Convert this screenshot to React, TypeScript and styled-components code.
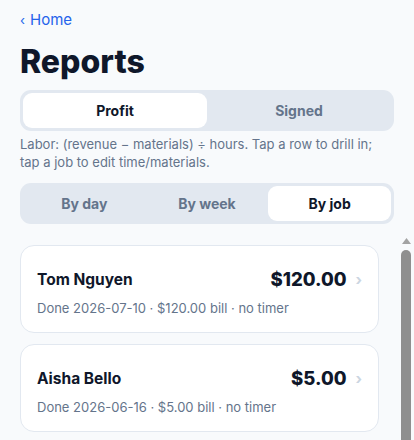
import React, { useState } from "react";
import styled, { createGlobalStyle } from "styled-components";

const GlobalStyle = createGlobalStyle`
  html, body { margin: 0; padding: 0; overflow: hidden; background: #f8fafc; }
  body { font-family: Inter, "Noto Sans", sans-serif; color: #0f172a; }
  * { box-sizing: border-box; }
`;

const Page = styled.div`
  display: flex;
  flex-direction: column;
`;

const Header = styled.div`
  padding: 10px 20px 0;
  display: flex;
  flex-direction: column;
`;

const BackLink = styled.a`
  color: #2563eb;
  font-size: 15px;
  line-height: 20px;
  text-decoration: none;
  display: flex;
  align-items: center;
  gap: 5px;
  span { font-size: 13px; }
`;

const Title = styled.h1`
  margin: 12px 0 8px;
  font-size: 32px;
  line-height: 40px;
  font-weight: 800;
  color: #0f172a;
`;

const Segmented = styled.div<{ $cols: number }>`
  display: grid;
  grid-template-columns: repeat(${(p) => p.$cols}, 1fr);
  background: #e2e8f0;
  border-radius: 11px;
  padding: 3px;
  height: 41px;
`;

const Seg = styled.button<{ $active: boolean }>`
  border: none;
  border-radius: 9px;
  background: ${(p) => (p.$active ? "#ffffff" : "transparent")};
  color: ${(p) => (p.$active ? "#0f172a" : "#64748b")};
  font-family: inherit;
  font-weight: 700;
  font-size: 14px;
  cursor: pointer;
`;

const Help = styled.p`
  margin: 4px 0 12px;
  font-size: 13px;
  line-height: 18px;
  color: #64748b;
`;

const ListArea = styled.div`
  margin-top: 11px;
  height: 400px;
  display: flex;
`;

const List = styled.div`
  flex: 1;
  min-width: 0;
  overflow-y: auto;
  padding: 10px 20px 20px;
  display: flex;
  flex-direction: column;
  gap: 11px;
`;

const ScrollBar = styled.div`
  flex: none;
  width: 15px;
  display: flex;
  flex-direction: column;
  align-items: center;
  padding: 3px 1px 0 0;
  background: #f8fafc;
`;

const Thumb = styled.div`
  flex: 1;
  width: 10px;
  margin-top: 6px;
  background: #8f8f8f;
  border-radius: 5px 5px 0 0;
`;

const Card = styled.div`
  flex: none;
  background: #ffffff;
  border: 1px solid #e2e8f0;
  border-radius: 14px;
  padding: 22px 16px 0 16px;
  height: 88px;
`;

const Row = styled.div`
  display: flex;
  align-items: center;
  justify-content: space-between;
`;

const Name = styled.div`
  font-size: 15.5px;
  font-weight: 700;
  color: #0f172a;
`;

const Amount = styled.div`
  display: flex;
  align-items: center;
  gap: 9px;
  font-size: 18.5px;
  font-weight: 800;
  color: #0f172a;
`;

const Chevron = styled.span`
  color: #cbd5e1;
  font-size: 15px;
  font-weight: 700;
`;

const Sub = styled.div`
  margin-top: 10px;
  font-size: 13px;
  color: #64748b;
`;

const jobs = [
  { name: "Tom Nguyen", amount: "$120.00", sub: "Done 2026-07-10 · $120.00 bill · no timer" },
  { name: "Aisha Bello", amount: "$5.00", sub: "Done 2026-06-16 · $5.00 bill · no timer" },
];

export default function App() {
  const [mode, setMode] = useState("Profit");
  const [range, setRange] = useState("By job");
  return (
    <Page>
      <GlobalStyle />
      <Header>
        <BackLink href="#"><span>‹</span>Home</BackLink>
        <Title>Reports</Title>
        <Segmented $cols={2}>
          {["Profit", "Signed"].map((m) => (
            <Seg key={m} $active={mode === m} onClick={() => setMode(m)}>{m}</Seg>
          ))}
        </Segmented>
        <Help>Labor: (revenue − materials) ÷ hours. Tap a row to drill in; tap a job to edit time/materials.</Help>
        <Segmented $cols={3}>
          {["By day", "By week", "By job"].map((m) => (
            <Seg key={m} $active={range === m} onClick={() => setRange(m)}>{m}</Seg>
          ))}
        </Segmented>
      </Header>
      <ListArea>
        <List>
          {jobs.map((j) => (
            <Card key={j.name}>
              <Row>
                <Name>{j.name}</Name>
                <Amount>{j.amount}<Chevron>›</Chevron></Amount>
              </Row>
              <Sub>{j.sub}</Sub>
            </Card>
          ))}
        </List>
        <ScrollBar aria-hidden>
          <svg width="9" height="6" viewBox="0 0 9 6">
            <polygon points="4.5,0 9,6 0,6" fill="#a3a3a3" />
          </svg>
          <Thumb />
        </ScrollBar>
      </ListArea>
    </Page>
  );
}
